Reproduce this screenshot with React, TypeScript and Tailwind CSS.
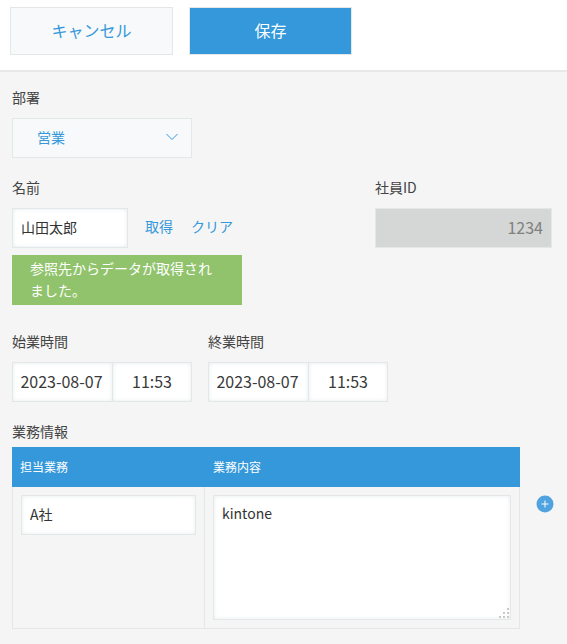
import React from 'react';

const font = { fontFamily: '"Noto Sans CJK JP", sans-serif' };

function Label({ children }: { children: React.ReactNode }) {
  return <div className="h-[20px] text-[14px] leading-[18px] text-[#444]">{children}</div>;
}

function DateTime() {
  return (
    <div className="flex h-[40px] w-[180px] text-[16px] text-[#3a3a3a]">
      <div className="flex w-[101px] items-center justify-center border border-[#e3e7e8] bg-white pb-[2px] pr-[2px] shadow-[inset_0_0_4px_#e8ebee]">2023-08-07</div>
      <div className="flex w-[79px] items-center justify-center border border-l-0 border-[#e3e7e8] bg-white pb-[2px] shadow-[inset_0_0_4px_#e8ebee]">11:53</div>
    </div>
  );
}

export default function App() {
  return (
    <div className="h-[644px] w-[567px] overflow-hidden bg-[#f5f5f5]" style={font}>
      {/* Header */}
      <div className="flex h-[72px] gap-[16px] border-b-2 border-[#e6e8e9] bg-white pl-[10px] pt-[7px]">
        <button className="h-[48px] w-[163px] border border-[#e3e7e8] bg-[#f7f9fa] pb-[2px] text-[16px] text-[#3498db]">キャンセル</button>
        <button className="h-[48px] w-[163px] border border-[#e3e7e8] bg-[#3498db] pb-[2px] text-[16px] text-white">保存</button>
      </div>

      <div className="pl-[12px] pt-[16px]">
        {/* 部署 */}
        <Label>部署</Label>
        <div className="mt-[10px] flex h-[40px] w-[180px] items-center justify-between border border-[#e3e7e8] bg-[#f7f9fa] pb-[2px] pl-[24px] pr-[13px] text-[14px] text-[#3498db]">
          <span>営業</span>
          <svg width="12" height="8" viewBox="0 0 12 8" fill="none" stroke="#3498db" strokeWidth="1">
            <path d="M0.5 1 L6 6.5 L11.5 1" />
          </svg>
        </div>

        {/* 名前 / 社員ID */}
        <div className="mt-[20px] flex">
          <div className="w-[363px]">
            <Label>名前</Label>
            <div className="mt-[10px] flex h-[40px] items-center">
              <div className="flex h-[40px] w-[116px] items-center border border-[#e3e7e8] bg-white pb-[2px] pl-[8px] text-[14px] text-[#333] shadow-[inset_0_0_4px_#e8ebee]">山田太郎</div>
              <span className="mb-[3px] ml-[17px] text-[14px] text-[#3498db]">取得</span>
              <span className="mb-[3px] ml-[18px] text-[14px] text-[#3498db]">クリア</span>
            </div>
            <div className="mt-[7px] w-[230px] bg-[#91c36c] pb-[4px] pl-[18px] pr-[20px] pt-[2px] text-[14px] leading-[22px] text-white">
              参照先からデータが取得されました。
            </div>
          </div>
          <div>
            <Label>社員ID</Label>
            <div className="mt-[10px] flex h-[40px] w-[177px] items-center justify-end border border-[#e3e7e8] bg-[#d4d7d6] pb-[2px] pr-[8px] text-[16px] text-[#808080]">1234</div>
          </div>
        </div>

        {/* 始業時間 / 終業時間 */}
        <div className="mt-[27px] flex gap-[16px]">
          <div>
            <Label>始業時間</Label>
            <div className="mt-[10px]"><DateTime /></div>
          </div>
          <div>
            <Label>終業時間</Label>
            <div className="mt-[10px]"><DateTime /></div>
          </div>
        </div>

        {/* 業務情報 */}
        <div className="mt-[20px]"><Label>業務情報</Label></div>
        <div className="mt-[5px] flex">
          <div className="w-[508px]">
            <div className="flex h-[40px] items-center bg-[#3498db] text-[12px] text-white">
              <div className="w-[192px] pl-[8px]">担当業務</div>
              <div className="pl-[9px]">業務内容</div>
            </div>
            <div className="flex h-[142px] border border-t-0 border-[#e3e7e8]">
              <div className="w-[192px] border-r border-[#e3e7e8] pl-[8px] pt-[8px]">
                <div className="flex h-[40px] w-[175px] items-center border border-[#e3e7e8] bg-white pb-[2px] pl-[8px] text-[14px] text-[#333] shadow-[inset_0_0_4px_#e8ebee]">A社</div>
              </div>
              <div className="pl-[8px] pt-[8px]">
                <div className="relative h-[125px] w-[298px] border border-[#e3e7e8] bg-white pl-[8px] pt-[7px] text-[14px] text-[#333] shadow-[inset_0_0_4px_#e8ebee]">
                  kintone
                  <svg className="absolute bottom-[1px] right-[1px]" width="10" height="10" viewBox="0 0 10 10" fill="#c8c8c8">
                    <rect x="8" y="0" width="2" height="2" />
                    <rect x="4" y="4" width="2" height="2" />
                    <rect x="8" y="4" width="2" height="2" />
                    <rect x="0" y="8" width="2" height="2" />
                    <rect x="4" y="8" width="2" height="2" />
                    <rect x="8" y="8" width="2" height="2" />
                  </svg>
                </div>
              </div>
            </div>
          </div>
          <div className="ml-[16px] mt-[48px]">
            <svg width="18" height="18" viewBox="0 0 18 18">
              <circle cx="9" cy="9" r="8.5" fill="#4fa3e0" />
              <path d="M5.5 9 H12.5 M9 5.5 V12.5" stroke="#fff" strokeWidth="1" />
            </svg>
          </div>
        </div>
      </div>
    </div>
  );
}
